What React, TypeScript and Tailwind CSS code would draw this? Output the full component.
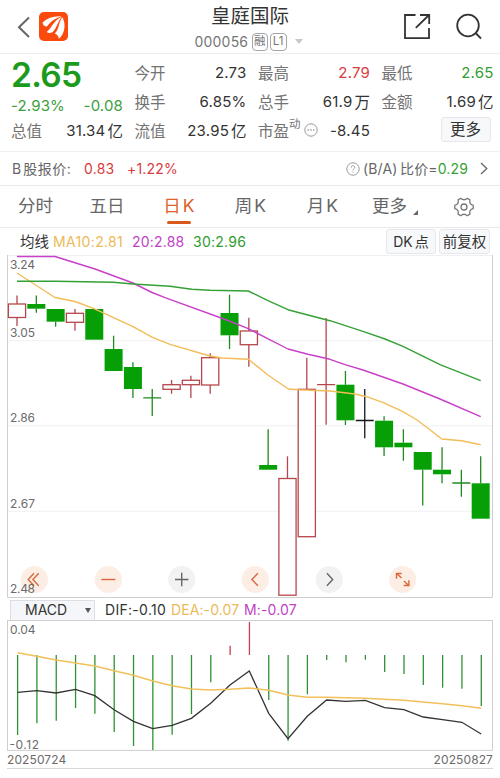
import React from "react";

const STEP = 19.32;
const X0 = 17;

type Candle = {
  kind: "up" | "down" | "flat";
  top: number;
  bottom: number;
  high: number;
  low: number;
};

const c = (kind: Candle["kind"], high: number, top: number, bottom: number, low: number): Candle => ({
  kind,
  high,
  top,
  bottom,
  low,
});

const candles: Candle[] = [
  c("up", 295.5, 304, 317.5, 326),
  c("down", 295.5, 304, 308.7, 312.7),
  c("down", 309, 309, 321.7, 326.7),
  c("up", 309, 313.3, 322.3, 330.7),
  c("down", 309, 309, 339.7, 339.7),
  c("down", 335.7, 349, 371, 371),
  c("down", 362.3, 367, 389, 398),
  c("down", 389, 397.8, 397.8, 416),
  c("up", 380, 384.7, 389.3, 393.7),
  c("up", 375.7, 380.3, 384.7, 398),
  c("up", 353.3, 357.7, 385, 393.7),
  c("down", 294.7, 313, 335.3, 349),
  c("up", 317.7, 331, 344.7, 366.7),
  c("down", 429.3, 465, 469.7, 469.7),
  c("up", 456.3, 478.5, 595.2, 595.2),
  c("up", 357.7, 389.3, 536.7, 536.7),
  c("up", 318, 384.7, 384.7, 424.7),
  c("down", 371, 384.7, 420.3, 425),
  c("flat", 389, 420.5, 420.5, 438.3),
  c("down", 416.3, 420.7, 447.3, 456),
  c("down", 429.3, 442.7, 447.3, 460.7),
  c("down", 452, 452, 469.7, 505.5),
  c("down", 447.3, 469.7, 474.3, 483.3),
  c("down", 469.7, 483, 483, 496.7),
  c("down", 456.3, 483.3, 518.7, 518.7),
];

const ma10 =
  "17,273 55,297.5 75,301.5 94,308.7 133,326.7 153,337.7 170,344.3 210,356 222,358 248.5,359.3 268,375 288.3,389 298,389.7 330,391 355,394 366.7,396.7 383.3,402.7 403,411.7 417,420 430,429.7 441.7,439 461.7,440.7 480.7,444.7";
const ma20 =
  "17,256.5 55,256.5 95,269 133,283 152,292.5 165,297.7 226.7,320 248.3,328.7 288,349 308,354.3 330,359.3 345,364.7 363,370 403,384 440,399 480.7,416.7";
const ma30 =
  "17,281.3 55,281.3 113,282.3 133,284 170,286.3 191.7,289.3 210,290.3 248.3,291 268,300.7 288,309.7 305,314.3 330,320.7 363,331.3 385,339 403,346.3 440,364.7 480.7,380.7";

const bars = [
  735, 723.3, 720.7, 708, 713.7, 732, 746, 750, 734.7, 714, 682.3, 645.7, 622, 700, 740.7, 694.3, 660, 662.3, 659.7,
  672, 674, 685, 687.7, 688.7, 706,
];
const dif = [
  692.3, 690.7, 693, 689.3, 695.7, 709.7, 721.3, 728.7, 725.3, 718.3, 703.3, 685, 671, 713.3, 738.7, 716.3, 700,
  701.3, 700.3, 707.7, 709.7, 717, 719.7, 722.3, 734,
];
const dea = [
  652.7, 656.3, 660, 663, 666, 670.7, 675.3, 681, 685.7, 689, 690, 689.3, 688, 690.3, 695, 697.3, 697.3, 697.7, 698.3,
  699.3, 700.3, 702, 703.7, 705.7, 708.3,
];

const toPoints = (ys: number[]) => ys.map((y, i) => `${(X0 + 0.5 + i * STEP).toFixed(1)},${y}`).join(" ");

function CandleMark({ candle, x }: { candle: Candle; x: number }) {
  const { kind, top, bottom, high, low } = candle;
  const color = kind === "up" ? "#b5474c" : kind === "down" ? "#1f8a1f" : "#15151c";
  if (bottom - top < 1) {
    return (
      <g stroke={color} strokeWidth="1.3">
        <path d={`M${x} ${high}V${low}M${x - 9} ${top}h18`} />
      </g>
    );
  }
  return (
    <g stroke={color} strokeWidth="1.3">
      <path d={`M${x} ${high}V${top}M${x} ${bottom}V${low}`} />
      {kind === "up" ? (
        <rect x={x - 8.6} y={top} width="17.2" height={bottom - top} fill="#fff" />
      ) : (
        <rect x={x - 9} y={top} width="18" height={bottom - top} fill="#06a006" stroke="none" />
      )}
    </g>
  );
}

const axis = [
  { t: "3.24", y: 268.5 },
  { t: "3.05", y: 336.8 },
  { t: "2.86", y: 422.3 },
  { t: "2.67", y: 508 },
  { t: "2.48", y: 593 },
];

function ChartButton({ x, gray, children }: { x: number; gray?: boolean; children: React.ReactNode }) {
  return (
    <g transform={`translate(${x} 579.5)`} fill="none" stroke={gray ? "#666" : "#d9683a"} strokeWidth="1.4">
      <circle r="13.6" fill={gray ? "#f2f2f2" : "#fdeee5"} stroke="none" />
      {children}
    </g>
  );
}

function KChart() {
  return (
    <svg className="block h-[343px] w-[500px]" viewBox="0 255 500 343">
      <path d="M8 255.5H492M8 340.7H492M8 425.8H492M8 511.3H492" stroke="#f0f0f2" />
      <path d="M7.5 255V597.5H492.5V255" fill="none" stroke="#cfcfcf" />
      {candles.map((k, i) => (
        <CandleMark key={i} candle={k} x={X0 + i * STEP} />
      ))}
      <g fill="none" strokeWidth="1.4" strokeLinejoin="round">
        <polyline points={ma10} stroke="#f2bd58" />
        <polyline points={ma20} stroke="#c840c8" />
        <polyline points={ma30} stroke="#35a035" />
      </g>
      <ChartButton x={34.5}>
        <path d="M-0.5-6.3-6.3 0-0.5 6.3M4.2-6.3-1.6 0 4.2 6.3" />
      </ChartButton>
      <ChartButton x={108.3}>
        <path d="M-7 0H7" />
      </ChartButton>
      <ChartButton x={181.7} gray>
        <path d="M-6.7 0H6.7M0-6.7V6.7" />
      </ChartButton>
      <ChartButton x={255.3}>
        <path d="M2.6-6.3-3.4 0 2.6 6.3" />
      </ChartButton>
      <ChartButton x={329.3} gray>
        <path d="M-2.4-6.3 3.4 0-2.4 6.3" />
      </ChartButton>
      <ChartButton x={402.7}>
        <path d="M-6.2-0.8V-6H-1M-6-6-1.2-1.4M6.2 0.8V6H1M6 6 1.2 1.4" />
      </ChartButton>
      <g className="font-[Inter]" fontSize="12" fill="#6b6b6b">
        {axis.map((a) => (
          <text key={a.t} x="10" y={a.y} textLength="25" lengthAdjust="spacing">
            {a.t}
          </text>
        ))}
      </g>
    </svg>
  );
}

function MacdChart() {
  return (
    <svg className="block h-[131px] w-[500px]" viewBox="0 620 500 131">
      <rect x="7.5" y="620.5" width="485" height="129.9" fill="none" stroke="#cfcfcf" />
      {bars.map((y, i) => {
        const x = X0 + 0.6 + i * STEP;
        return <path key={i} d={`M${x} 655V${y}`} stroke={y < 655 ? "#c9414a" : "#2e932e"} strokeWidth="1.3" />;
      })}
      <polyline points={toPoints(dif)} fill="none" stroke="#333" strokeWidth="1.3" />
      <polyline points={toPoints(dea)} fill="none" stroke="#f2c05a" strokeWidth="1.4" />
      <g className="font-[Inter]" fontSize="12" fill="#6b6b6b">
        <text x="10" y="633.5" textLength="25.5">
          0.04
        </text>
        <text x="9.5" y="748.7" textLength="29.5">
          -0.12
        </text>
      </g>
    </svg>
  );
}

function Cell({
  label,
  value,
  unit,
  tone = "text-[#333]",
}: {
  label: React.ReactNode;
  value: string;
  unit?: string;
  tone?: string;
}) {
  return (
    <div className="flex h-[29px] items-center justify-between whitespace-nowrap">
      <span className="flex text-[15.5px] text-[#737373]">{label}</span>
      <span className={`flex items-center text-[15px] tracking-[0.2px] ${tone}`}>
        {value}
        {unit && <span className="ml-[2px] text-[15.5px] tracking-normal">{unit}</span>}
      </span>
    </div>
  );
}

const tabs = [
  { t: "分时", w: "w-[71px]" },
  { t: "五日", w: "w-[72px]" },
  { t: "日", k: true, w: "w-[72px]", active: true },
  { t: "周", k: true, w: "w-[71px]" },
  { t: "月", k: true, w: "w-[73px]" },
];

export default function App() {
  return (
    <div className="h-[778px] w-[500px] overflow-hidden bg-white font-[Inter,'Noto_Sans_CJK_SC',sans-serif] text-[#333]">
      <header className="flex h-[54px] items-start border-b border-[#ececec]">
        <div className="flex w-[180px] items-center pt-[12px] pl-[17px]">
          <svg className="h-[22px] w-[13px]" viewBox="0 0 13 22" fill="none" stroke="#666" strokeWidth="2">
            <path d="M12 1.5 2 11.2 12 21" />
          </svg>
          <svg className="ml-[9px] h-[29px] w-[29px]" viewBox="0 0 29 29">
            <rect width="29" height="29" rx="5" fill="#fb4b0c" />
            <g fill="#fff">
              <path d="M3.600 10.600C8.500 6 15 3.800 22.500 4.400 15.500 6.500 11.500 9.500 7.800 14.600 5.400 14.600 3.900 13 3.600 10.600Z" />
              <path d="M7.600 20C12.500 17 14 8.500 23 4.800 18.800 9 18.500 15.500 13.400 20.300 11.200 21.500 9 21.300 7.600 20Z" />
              <path d="M15.800 21.500C20.500 17 19.500 9.500 23.500 5.200 27 12 26.200 21.500 19.800 26.800 19.800 24.500 18.500 22.500 15.800 21.500Z" />
            </g>
          </svg>
        </div>
        <div className="flex w-[140px] flex-col items-center whitespace-nowrap">
          <h1 className="mt-[3px] text-[19.5px] leading-[27px] text-[#333]">皇庭国际</h1>
          <div className="mt-[2px] flex h-[19px] w-[111px] items-center text-[14px] text-[#777]">
            <span className="w-[57px] tracking-[0.2px]">000056</span>
            <span className="flex h-[18px] w-[16.5px] items-center justify-center rounded-[4px] border border-[#a5a5a5] text-[11.5px] leading-none">
              融
            </span>
            <span className="ml-[1.500px] flex h-[18px] w-[17px] items-center justify-center rounded-[4px] border border-[#a5a5a5] text-[11.5px] leading-none">
              L1
            </span>
            <svg className="ml-[8px] h-[5px] w-[8px] shrink-0" viewBox="0 0 8 5">
              <path d="M0 0h8L4 5z" fill="#c8c8c8" />
            </svg>
          </div>
        </div>
        <svg className="mt-[13px] ml-[83px] h-[27px] w-[28px]" viewBox="0 0 28 27" fill="none" stroke="#333" strokeWidth="1.8">
          <path d="M12.5 2H2V25.200H26V15M17 2H26.200V11M26 2 12.800 14.800" />
        </svg>
        <svg className="mt-[13px] ml-[24px] h-[27px] w-[28px]" viewBox="0 0 28 27" fill="none" stroke="#333" strokeWidth="1.8">
          <circle cx="13" cy="12.500" r="10.800" />
          <path d="M20.500 20 26 25.500" />
        </svg>
      </header>

      <section className="grid h-[98px] grid-cols-[112px_112px_112px_112px] gap-x-[11.5px] border-b border-[#f0f0f0] pt-[5px] pl-[11px]">
        <div className="whitespace-nowrap">
          <div className="h-[33px] text-[33.5px] leading-[32px] font-semibold tracking-[-0.7px] text-[#1b9a1b]">2.65</div>
          <div className="flex h-[25px] items-center justify-between pt-[4px] text-[15px] tracking-[0.15px] text-[#3ba03b]">
            <span>-2.93%</span>
            <span>-0.08</span>
          </div>
          <Cell label="总值" value="31.34" unit="亿" />
        </div>
        <div>
          <Cell label="今开" value="2.73" />
          <Cell label="换手" value="6.85%" />
          <Cell label="流值" value="23.95" unit="亿" />
        </div>
        <div>
          <Cell label="最高" value="2.79" tone="text-[#d93a40]" />
          <Cell label="总手" value="61.9" unit="万" />
          <Cell
            label={
              <>
                市盈
                <span className="-mt-[4px] text-[11.5px]">动</span>
                <svg className="mt-[3px] ml-[3px] h-[14px] w-[14px]" viewBox="0 0 14 14" fill="none" stroke="#999">
                  <circle cx="7" cy="7" r="6.200" />
                  <path d="M3.500 7h1.400M6.300 7h1.400M9.100 7h1.400" strokeWidth="1.400" />
                </svg>
              </>
            }
            value="-8.45"
          />
        </div>
        <div>
          <Cell label="最低" value="2.65" tone="text-[#35a035]" />
          <Cell label="金额" value="1.69" unit="亿" />
          <div className="flex justify-end pr-[3px]">
            <button className="h-[25px] w-[50px] rounded-[3px] border border-[#e6e7ec] bg-[#f7f8fa] text-[15.5px] leading-[22px]">
              更多
            </button>
          </div>
        </div>
      </section>

      <section className="flex h-[34px] items-center border-b border-[#e9e9e9] pl-[12px] text-[14px] whitespace-nowrap text-[#666]">
        <span className="w-[72px] tracking-[0.5px]">
          B<span className="ml-[1.500px]">股报价:</span>
        </span>
        <span className="w-[43px] tracking-[0.25px] text-[#d93a40]">0.83</span>
        <span className="w-[219px] tracking-[0.2px] text-[#d93a40]">+1.22%</span>
        <svg className="h-[14px] w-[14px]" viewBox="0 0 14 14" fill="none" stroke="#999">
          <circle cx="7" cy="7" r="6.200" />
          <path d="M5.200 5.600C5.200 3 8.800 3.200 8.800 5.400 8.800 6.900 7 6.800 7 8.400M7 9.700v1" />
        </svg>
        <span className="ml-[3px] w-[117px] tracking-[0.15px]">
          (B/A)<span className="ml-[2.500px]">比价=</span>
          <span className="text-[#35a035]">0.29</span>
        </span>
        <svg className="h-[13px] w-[8px]" viewBox="0 0 8 13" fill="none" stroke="#666" strokeWidth="1.300">
          <path d="M1 1 6.800 6.500 1 12" />
        </svg>
      </section>

      <nav className="flex h-[42px] items-center border-b border-[#e9e9e9] text-[17.5px] whitespace-nowrap text-[#666]">
        {tabs.map((tab) => (
          <div
            key={tab.t}
            className={`relative flex h-full shrink-0 items-center justify-center ${tab.w} ${tab.active ? "text-[#dd6128]" : ""}`}
          >
            {tab.t}
            {tab.k && <span className="ml-[2px]">K</span>}
            {tab.active && <i className="absolute bottom-[3px] left-[24px] h-[3px] w-[24px] rounded-full bg-[#d9591c]" />}
          </div>
        ))}
        <span className="ml-[13px]">更多</span>
        <svg className="mt-[11px] ml-[6px] h-[5px] w-[5px]" viewBox="0 0 5 5">
          <path d="M5 0v5H0z" fill="#666" />
        </svg>
        <svg className="ml-[36px] h-[20px] w-[20px]" viewBox="0 0 20 20" fill="none" stroke="#777" strokeWidth="1.300" strokeLinejoin="round">
          <path d="M6.700 1.300Q10 4.300 13.300 1.300L15.900 2.900Q14.800 7.300 19.200 8.300V11.700Q14.800 12.700 15.900 17.100L13.300 18.700Q10 15.700 6.700 18.700L4.100 17.100Q5.200 12.700.8 11.700V8.300Q5.200 7.300 4.100 2.900Z" />
          <circle cx="10" cy="10" r="3" />
        </svg>
      </nav>

      <section className="flex h-[27px] items-center pl-[20px] text-[14px] whitespace-nowrap">
        <span className="w-[33px] text-[14.5px]">均线</span>
        <span className="w-[79px] tracking-[0.35px] text-[#ecba58]">MA10:2.81</span>
        <span className="w-[61px] tracking-[0.2px] text-[#c23fc8]">20:2.88</span>
        <span className="w-[193px] tracking-[0.25px] text-[#2f9c2f]">30:2.96</span>
        <button className="h-[25px] w-[50px] rounded-[3px] border border-[#e6e7ec] bg-[#f7f8fa] text-[14px] leading-[22px]">
          DK<span className="ml-[2px]">点</span>
        </button>
        <button className="ml-[3px] h-[25px] w-[51px] rounded-[3px] border border-[#e6e7ec] bg-[#f7f8fa] text-[14.5px] leading-[22px]">
          前复权
        </button>
      </section>

      <KChart />

      <section className="flex h-[22px] items-center pl-[10px] text-[14px] whitespace-nowrap">
        <div className="mt-[2px] flex h-[20px] w-[85px] items-center border border-b-0 border-[#dcdee3] bg-[#f5f6f9] pl-[14px] leading-[18px]">
          <span className="w-[60px] -translate-y-[1px]">MACD</span>
          <svg className="h-[5px] w-[6px]" viewBox="0 0 5 5" preserveAspectRatio="none">
            <path d="M0 0h5L2.500 5z" fill="#555" />
          </svg>
        </div>
        <span className="ml-[10px] w-[66px] tracking-[0.3px]">DIF:-0.10</span>
        <span className="w-[73px] tracking-[0.1px] text-[#ecba58]">DEA:-0.07</span>
        <span className="tracking-[0.15px] text-[#c23fc8]">M:-0.07</span>
      </section>

      <MacdChart />

      <footer className="mr-[7px] ml-[7px] flex h-[18px] items-center justify-between border-b border-[#d8d8d8] text-[12px] tracking-[0.1px] text-[#6b6b6b]">
        <span>20250724</span>
        <span>20250827</span>
      </footer>
    </div>
  );
}
